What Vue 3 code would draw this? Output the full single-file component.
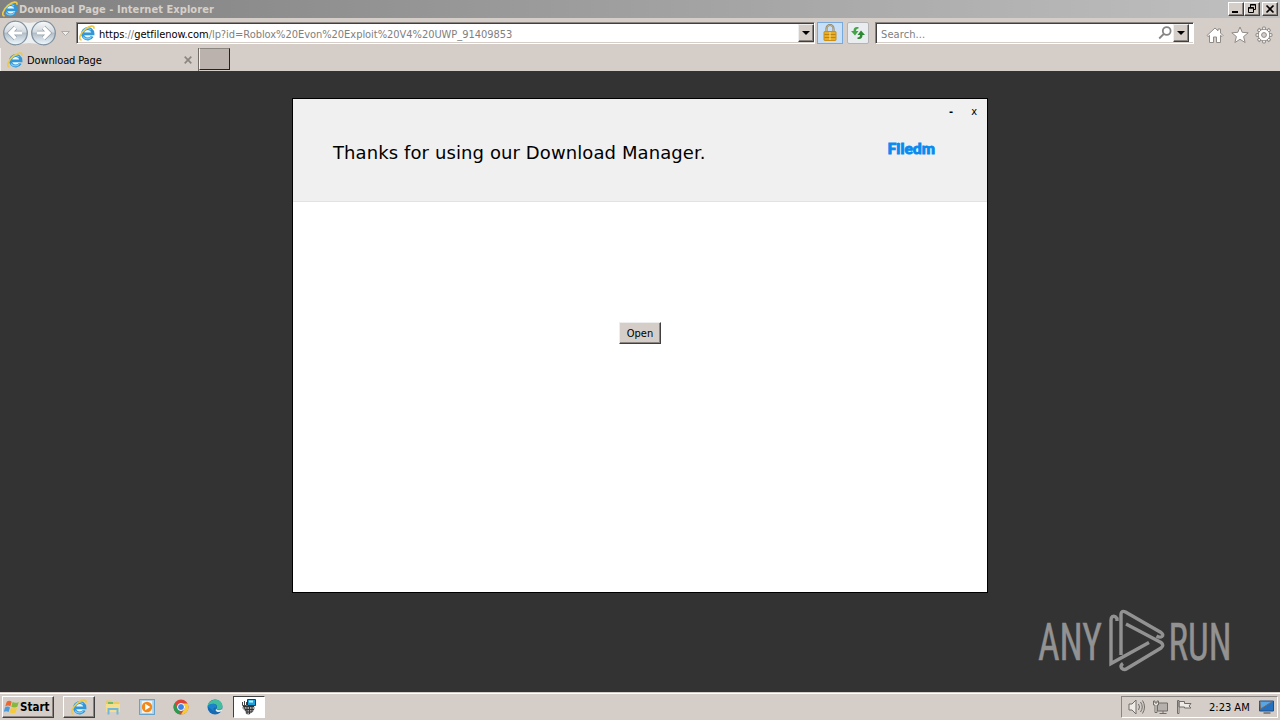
<template>
    <div class="desktop">
        <svg class="symbols">
            <symbol id="ie" viewBox="0 0 16 16">
                <circle cx="8.5" cy="8.700" r="5" fill="#e9f6fc" />
                <path d="M13.300 11.400A5.300 5.300 0 1 1 14 8.900H5" fill="none" stroke="#3096d8" stroke-width="2.900" />
                <path d="M12.500 11.400A4.900 4.900 0 0 1 4 11.600M4.200 5.800A5 5 0 0 1 12 5" fill="none" stroke="#78cbf3" stroke-width="1.200" />
                <path d="M2.600 14.800C-1.500 15 1.600 8 6.500 4.200C10 1.300 15.800-.8 14.800 3.700" fill="none" stroke="#ecc94a" stroke-width="1.700" />
            </symbol>
        </svg>

        <div class="title-bar">
            <svg class="title-icon"><use href="#ie" /></svg>
            <span class="title-text">Download Page - Internet Explorer</span>
            <div class="win-buttons">
                <div class="win-button"><svg viewBox="0 0 14 12"><path d="M3 9h6" stroke="#000" stroke-width="2" /></svg></div>
                <div class="win-button">
                    <svg viewBox="0 0 14 12">
                        <path d="M5.5 4V1.5h5v5H9M5 2h6" fill="none" stroke="#000" />
                        <path d="M3.5 4.5h5v5h-5zM3 5.2h6" fill="none" stroke="#000" />
                    </svg>
                </div>
                <div class="win-button close"><svg viewBox="0 0 14 12"><path d="M3.5 2.5l7 7M10.5 2.5l-7 7" stroke="#000" stroke-width="1.7" /></svg></div>
            </div>
        </div>

        <div class="nav-bar">
            <svg class="arrows" viewBox="0 0 74 30">
                <defs>
                    <linearGradient id="orb" x2="0" y2="1">
                        <stop offset="0" stop-color="#f8fafb" />
                        <stop offset=".45" stop-color="#d3d9de" />
                        <stop offset=".52" stop-color="#b3bec8" />
                        <stop offset="1" stop-color="#eff9ff" />
                    </linearGradient>
                </defs>
                <path d="M16 2Q29 8 43 2V28Q29 22 16 28z" fill="#edf0f1" />
                <circle cx="15.5" cy="15" r="11.800" fill="url(#orb)" stroke="#8292a0" stroke-width="1.300" />
                <circle cx="43.5" cy="15" r="11.800" fill="url(#orb)" stroke="#8292a0" stroke-width="1.300" />
                <path d="M15.500 9.500L10 15l5.500 5.500M10.500 15H22" class="arrow-edge" />
                <path d="M15.500 9.500L10 15l5.500 5.500M10.500 15H22" class="arrow" />
                <path d="M43.500 9.500L49 15l-5.500 5.500M48.500 15H37" class="arrow-edge" />
                <path d="M43.500 9.500L49 15l-5.500 5.500M48.500 15H37" class="arrow" />
                <path d="M61.500 13.500h8l-4 4z" fill="#eee" stroke="#b0aaa4" />
            </svg>
            <div class="field address">
                <svg class="field-icon"><use href="#ie" /></svg>
                <span class="url"><b>https</b>://<b>getfilenow.com</b><span class="path">{{ urlPath }}</span></span>
                <div class="drop"><i></i></div>
            </div>
            <div class="lock">
                <svg viewBox="0 0 16 18">
                    <path d="M4.500 8V4.500a3.500 3.500 0 0 1 7 0V8" fill="none" stroke="#8a7b55" stroke-width="2" />
                    <path d="M4.500 8V4.500a3.500 3.500 0 0 1 7 0V8" fill="none" stroke="#d6cca8" stroke-width=".7" />
                    <rect x="2" y="7.500" width="12" height="9" rx=".7" fill="#e8ad25" stroke="#c98f18" />
                    <path d="M2.500 10.500h11M2.500 13.500h11" stroke="#bd850f" /><path d="M8 8v8" stroke="#ffe283" />
                </svg>
            </div>
            <div class="refresh">
                <svg viewBox="0 0 16 14">
                    <path d="M8.500 1H7Q3.500 1 3.500 5H1l4 4.500L8.500 5H6Q6 2.500 8.500 2.500z" fill="#43a448" />
                    <path d="M7.500 13H9q3.500 0 3.500-4H15l-4-4.500L7.500 9H10q0 2.500-2.500 2.500z" fill="#2b8a31" />
                </svg>
            </div>
            <div class="field search">
                <span class="placeholder">Search...</span>
                <svg class="glass" viewBox="0 0 14 14"><circle cx="8.700" cy="5" r="3.900" /><path d="M5.700 8L1.200 12.500" /></svg>
                <div class="drop"><i></i></div>
            </div>
            <div class="tools">
                <svg viewBox="0 0 18 18"><path d="M1 9.500L9 2l3 2.800V3h2.500v4L17 9.500l-1 1l-1.500-1.200V16.500H10.500V11h-3v5.500h-4V9.300L2 10.700z" /></svg>
                <svg viewBox="0 0 18 18"><path d="M9 1l2.200 5.300l6 .5l-4.600 3.800l1.500 5.900L9 13.300l-5.100 3.200l1.500-5.900L.8 6.800l6-.5z" /></svg>
                <svg viewBox="0 0 18 18">
                    <path v-for="n in 8" :key="n" d="M7.400 4L7.800 1h2.400l.4 3z" :transform="`rotate(${n * 45} 9 9)`" />
                    <circle cx="9" cy="9" r="5.700" /><circle cx="9" cy="9" r="5.200" class="gear-fill" />
                    <circle cx="9" cy="9" r="2.400" class="gear-hole" />
                </svg>
            </div>
        </div>

        <div class="tab-bar">
            <div class="tab">
                <svg class="tab-icon"><use href="#ie" /></svg>
                <span class="tab-title">Download Page</span>
                <svg class="tab-close" viewBox="0 0 8 8"><path d="M.7.7l6.600 6.600M7.300.7L.7 7.300" /></svg>
            </div>
            <div class="new-tab"></div>
        </div>

        <main class="page">
            <section class="dialog">
                <header class="dialog-header">
                    <h1>Thanks for using our Download Manager.</h1>
                    <div class="header-right">
                        <div class="dialog-controls"><span class="minimize">-</span><span>x</span></div>
                        <svg class="brand" viewBox="0 0 60 24"><text x="1.500" y="17.500" textLength="47.500" lengthAdjust="spacingAndGlyphs">Filedm</text></svg>
                    </div>
                </header>
                <div class="dialog-body"><button>Open</button></div>
            </section>
            <svg class="watermark" viewBox="0 0 230 72">
                <text x="0" y="51.500" textLength="64" lengthAdjust="spacingAndGlyphs">ANY</text>
                <text x="130.500" y="51.500" textLength="63" lengthAdjust="spacingAndGlyphs">RUN</text>
                <path d="M79 13V10.500Q77 7.500 74.500 8.500Q73 9.500 73 12V55.500L111 34.500" />
                <path d="M83 47V6Q83.500 2 87.500 4L123 24.500Q126 27 124 28.500Q122 30 118.500 28" />
                <path d="M88 16L123 34.500Q126.500 37 123 40L89 60.500Q86 62.500 83.500 60Q82 57.500 85 55.500" />
            </svg>
        </main>

        <footer class="taskbar">
            <div class="start">
                <svg viewBox="0 0 16 16">
                    <path d="M2.700 2.800Q5 .8 7.700 2.700L6.300 7.400Q4 5.800 1.200 7.500z" fill="#ec6832" />
                    <path d="M8.600 3Q11.500 4.600 14.800 2.900L13.300 7.700Q10.500 9.200 7.300 7.700z" fill="#85b83d" />
                    <path d="M1 8.400Q3.500 6.800 6 8.400L4.600 13Q2 11.500-.3 13z" fill="#4a9bdc" />
                    <path d="M7 8.700Q10 10.200 13 8.700L11.600 13.500Q8.800 15 5.600 13.300z" fill="#f6c938" />
                </svg>
                <span>Start</span>
            </div>
            <div class="task raised"><svg><use href="#ie" /></svg></div>
            <div class="task">
                <svg viewBox="0 0 16 16">
                    <path d="M1 1.500h5l1 1.500h7v10H1z" fill="#e8cb68" /><path d="M3 3h5v2H3z" fill="#73b968" />
                    <path d="M1 5h14v8H1z" fill="#f5df8d" /><path d="M3.500 15.500V10h9v5.500" fill="none" stroke="#71b8dc" stroke-width="2" />
                </svg>
            </div>
            <div class="task">
                <svg viewBox="0 0 16 16">
                    <rect x=".6" y=".6" width="14.800" height="14.800" fill="#b7d8ed" stroke="#5c9dc9" />
                    <rect x="3" y="2" width="10" height="12" fill="#f4f1e8" /><circle cx="8" cy="8" r="5.200" fill="#f18819" /><path d="M6.200 4.800L11.300 8l-5.100 3.200z" fill="#fff" />
                </svg>
            </div>
            <div class="task">
                <svg viewBox="0 0 16 16">
                    <circle cx="8" cy="8" r="7.500" fill="#db4437" /><path d="M1.500 4.300L6 11.500L8 15.500A7.500 7.500 0 0 1 1.500 4.300z" fill="#2c9b52" />
                    <path d="M8 4.500h6.700A7.500 7.500 0 0 1 8 15.500l3.500-6z" fill="#f7cc36" /><circle cx="8" cy="8" r="3.500" fill="#3e82e5" stroke="#fff" />
                </svg>
            </div>
            <div class="task">
                <svg viewBox="0 0 16 16">
                    <circle cx="8" cy="8" r="7.500" fill="#176bb3" /><path d="M.6 7.200C1-1 15-2 15.500 7c0 4-4 4.500-6 3C12 5 6 2.500.6 7.200z" fill="#43bd9e" />
                    <path d="M.6 7.200C5 2.500 11 5.500 9 9c-3-2-4 3 .5 5.500" fill="#1b83cb" /><path d="M9.500 10C11 12 14 11 15 10v2c-3 2-6 1-6.500-1z" fill="#e2edf0" />
                </svg>
            </div>
            <div class="task pressed">
                <svg viewBox="0 0 16 16">
                    <path d="M6.500.5h8v6h-8z" fill="#1aa2df" stroke="#234" /><path d="M8 1.500h4v2H8z" fill="#bdefff" />
                    <path d="M1.500 3v3.500h4V3M3.500 2v4" fill="none" stroke="#444" />
                    <path d="M2 7h11l1 2-2 4-2 1-2 2-3-1-1-3-3-3z" fill="#a5a5a5" />
                    <path d="M2 7.500h11M3 8l2 4M6 8v7M8.500 8v7M11 8v5M4 10.500h9M5 13h6" fill="none" stroke="#333" />
                </svg>
            </div>
            <div class="tray">
                <svg class="speaker" viewBox="0 0 17 16"><path d="M1 5h3l4-4v14l-4-4H1z" /><path d="M10.500 5q2 3 0 6M12.500 3q3.500 5 0 10M14.500 1.500q4 6.500 0 13" fill="none" /></svg>
                <svg class="network" viewBox="0 0 17 16"><path d="M5.500 4h10v8h-10z" class="screen" /><path d="M7.500 14.500h7M11 12v2" fill="none" /><path d="M1.500 2v4h1.500v7.500h2V6h1.500V2H5v2H3V2z" /></svg>
                <svg class="flag" viewBox="0 0 17 16"><path d="M1.500 1.500h1.500v13H1.500zM3 2.500h5.500v2H15l-2 2.500l2 2H8.500v-1H3z" /></svg>
                <span class="clock">2:23 AM</span>
                <svg class="show-desktop" viewBox="0 0 16 14"><path d="M1 1h14v10H1z" fill="#2670c0" stroke="#204f86" /><path d="M1.500 1.500H14L2 9z" fill="#58a6e5" /><path d="M5 13h7" stroke="#343b46" /></svg>
            </div>
        </footer>
    </div>
</template>

<script setup>
const urlPath = '/lp?id=Roblox%20Evon%20Exploit%20V4%20UWP_91409853';
</script>

<style>
body {
    margin: 0;
    overflow: hidden;
}
</style>

<style scoped>
* {
    box-sizing: border-box;
}

.desktop {
    display: flex;
    flex-direction: column;
    width: 1280px;
    height: 720px;
    background: #d5cec8;
    font-family: "DejaVu Sans Condensed", "DejaVu Sans", sans-serif;
    font-stretch: condensed;
    font-size: 11px;
    color: #000;
    white-space: nowrap;
}

svg {
    display: block;
    flex-shrink: 0;
}

.symbols {
    position: absolute;
    width: 0;
    height: 0;
}

.title-bar {
    display: flex;
    align-items: center;
    height: 18px;
    padding: 0 2px;
    background: linear-gradient(90deg, #808080, #c0c0c0);
}

.title-icon {
    width: 16px;
    height: 16px;
}

.title-text {
    margin-left: 1px;
    color: #d7d0c9;
    font-weight: bold;
    letter-spacing: 0.06px;
}

.win-buttons {
    display: flex;
    margin-left: auto;
}

.win-button {
    width: 16px;
    height: 14px;
    background: #d5cec8;
    border: 1px solid;
    border-color: #fff #404040 #404040 #fff;
    box-shadow: inset -1px -1px #8a8580;
}

.win-button svg {
    width: 14px;
    height: 12px;
}

.close {
    margin-left: 2px;
}

.nav-bar {
    display: flex;
    align-items: center;
    height: 30px;
}

.arrows {
    width: 74px;
    height: 30px;
    margin-right: 2px;
}

.arrow-edge {
    fill: none;
    stroke: #94a2ae;
    stroke-width: 4.6;
}

.arrow {
    fill: none;
    stroke: #fff;
    stroke-width: 3.2;
}

.field {
    display: flex;
    align-items: center;
    height: 22px;
    background: #fff;
    border: 1px solid;
    border-color: #8a8580 #fff #fff #8a8580;
    box-shadow: inset 1px 1px #404040, inset 0 -1px #d5cec8;
}

.address {
    width: 739px;
    padding-left: 2px;
}

.field-icon {
    width: 16px;
    height: 16px;
    margin-right: 4px;
}

.url {
    padding-top: 2px;
    color: #808080;
    letter-spacing: -0.04px;
}

.url b {
    color: #000;
    font-weight: normal;
}

.drop {
    display: flex;
    align-items: center;
    justify-content: center;
    width: 16px;
    height: 18px;
    margin-left: auto;
    background: #d5cec8;
    border: 1px solid;
    border-color: #eee #404040 #404040 #eee;
    box-shadow: inset -1px -1px #8a8580;
}

.drop i {
    border: 4px solid transparent;
    border-top-color: #000;
    border-bottom: 0;
}

.lock {
    display: flex;
    align-items: center;
    justify-content: center;
    width: 26px;
    height: 22px;
    margin-left: 2px;
    background: #c8dff8;
    border: 1px solid #78a9dc;
}

.lock svg {
    width: 16px;
    height: 18px;
}

.refresh {
    display: flex;
    align-items: center;
    justify-content: center;
    width: 22px;
    height: 22px;
    margin-left: 4px;
    background: #e9edf0;
    border: 1px solid #b2b4b5;
    border-radius: 2px;
}

.refresh svg {
    width: 16px;
    height: 14px;
}

.search {
    width: 319px;
    margin-left: 6px;
    padding-right: 4px;
    padding-left: 5px;
}

.placeholder {
    padding-top: 2px;
    color: #808080;
    letter-spacing: 0.1px;
}

.glass {
    width: 14px;
    height: 14px;
    margin-left: auto;
    fill: none;
    stroke: #858585;
    stroke-width: 1.8;
}

.search .drop {
    margin-left: 1px;
}

.tools {
    display: flex;
    gap: 6.5px;
    margin-left: 12px;
    padding-top: 4px;
}

.tools svg {
    width: 18px;
    height: 18px;
    fill: #fff;
    stroke: #918b86;
}

.tools .gear-fill {
    stroke: none;
}

.tools .gear-hole {
    fill: #d5cec8;
}

.tab-bar {
    display: flex;
    height: 23px;
}

.tab {
    display: flex;
    align-items: center;
    width: 199px;
    padding: 0 6px;
    border-left: 1px solid #f2efed;
    border-right: 1px solid #706b67;
}

.tab-icon {
    width: 16px;
    height: 16px;
    margin-right: 4px;
}

.tab-title {
    padding-top: 2px;
    letter-spacing: -0.12px;
}

.tab-close {
    width: 8px;
    height: 8px;
    margin-left: auto;
    stroke: #8c8681;
    stroke-width: 1.7;
}

.new-tab {
    width: 31px;
    height: 22px;
    background: #bbb2ad;
    border: 1px solid;
    border-color: #8c8681 #222 #222 #f2efed;
}

.page {
    position: relative;
    display: flex;
    justify-content: center;
    height: 621px;
    padding-top: 27px;
    background: #333;
}

.dialog {
    width: 696px;
    height: 495px;
    background: #fff;
    border: 1px solid #000;
}

.dialog-header {
    display: flex;
    justify-content: space-between;
    height: 103px;
    background: #f0f0f0;
    border-bottom: 1px solid #e2e2e2;
}

.dialog-header h1 {
    margin: 42px 0 0 40px;
    font-family: "DejaVu Sans", sans-serif;
    font-stretch: normal;
    font-size: 18px;
    font-weight: normal;
    line-height: 24px;
    letter-spacing: 0.1px;
}

.header-right {
    width: 101px;
}

.dialog-controls {
    display: flex;
    justify-content: flex-end;
    gap: 18px;
    height: 25px;
    padding-right: 10px;
    font-family: "DejaVu Sans", sans-serif;
    line-height: 25px;
}

.minimize {
    font-weight: bold;
}

.brand {
    width: 60px;
    height: 24px;
    margin-top: 12px;
}

.brand text {
    font-family: Lato, "Open Sans", sans-serif;
    font-size: 15.5px;
    font-weight: 900;
    fill: #078bf0;
    stroke: #078bf0;
    stroke-width: 0.9;
}

.dialog-body {
    display: flex;
    justify-content: center;
    padding-top: 120px;
}

.dialog button {
    width: 42px;
    height: 22px;
    padding: 0;
    background: #d5cec8;
    border: 1px solid;
    border-color: #eee #404040 #404040 #eee;
    box-shadow: inset -1px -1px #8a8580;
    font: inherit;
    color: #000;
}

.watermark {
    position: absolute;
    left: 1038px;
    top: 537px;
    width: 230px;
    height: 72px;
    fill: none;
    stroke: #929292;
    stroke-width: 3.4;
}

.watermark text {
    font-family: Roboto, sans-serif;
    font-size: 52px;
    fill: #929292;
    stroke: #929292;
    stroke-width: 0.5;
}

.taskbar {
    display: flex;
    align-items: center;
    height: 28px;
    padding: 2px 2px 0;
    background: #d5cec8;
    box-shadow: inset 0 1px #d5cec8, inset 0 2px #fff;
}

.start {
    display: flex;
    align-items: center;
    width: 52px;
    height: 22px;
    margin-right: 9px;
    padding-left: 1px;
    border: 1px solid;
    border-color: #fff #404040 #404040 #fff;
    box-shadow: inset -1px -1px #8a8580;
    font-size: 11.5px;
    font-weight: bold;
}

.start svg {
    width: 16px;
    height: 16px;
}

.task {
    display: flex;
    align-items: center;
    justify-content: center;
    width: 32px;
    height: 22px;
    margin-right: 2px;
}

.task svg {
    width: 16px;
    height: 16px;
}

.raised {
    border: 1px solid;
    border-color: #fff #404040 #404040 #fff;
    box-shadow: inset -1px -1px #8a8580;
}

.pressed {
    background: #fff;
    border: 1px solid;
    border-color: #404040 #fff #fff #404040;
}

.tray {
    display: flex;
    align-items: center;
    width: 157px;
    height: 22px;
    margin-left: auto;
    padding: 0 2px 0 6px;
    border: 1px solid;
    border-color: #8a8580 #fff #fff #8a8580;
}

.tray svg {
    width: 17px;
    height: 16px;
    margin-right: 7px;
    fill: #eeeae6;
    stroke: #706c68;
}

.tray .screen {
    fill: #b5b0ac;
}

.clock {
    margin-left: 9px;
}

.tray .show-desktop {
    height: 14px;
    margin: 0 0 0 auto;
}
</style>
